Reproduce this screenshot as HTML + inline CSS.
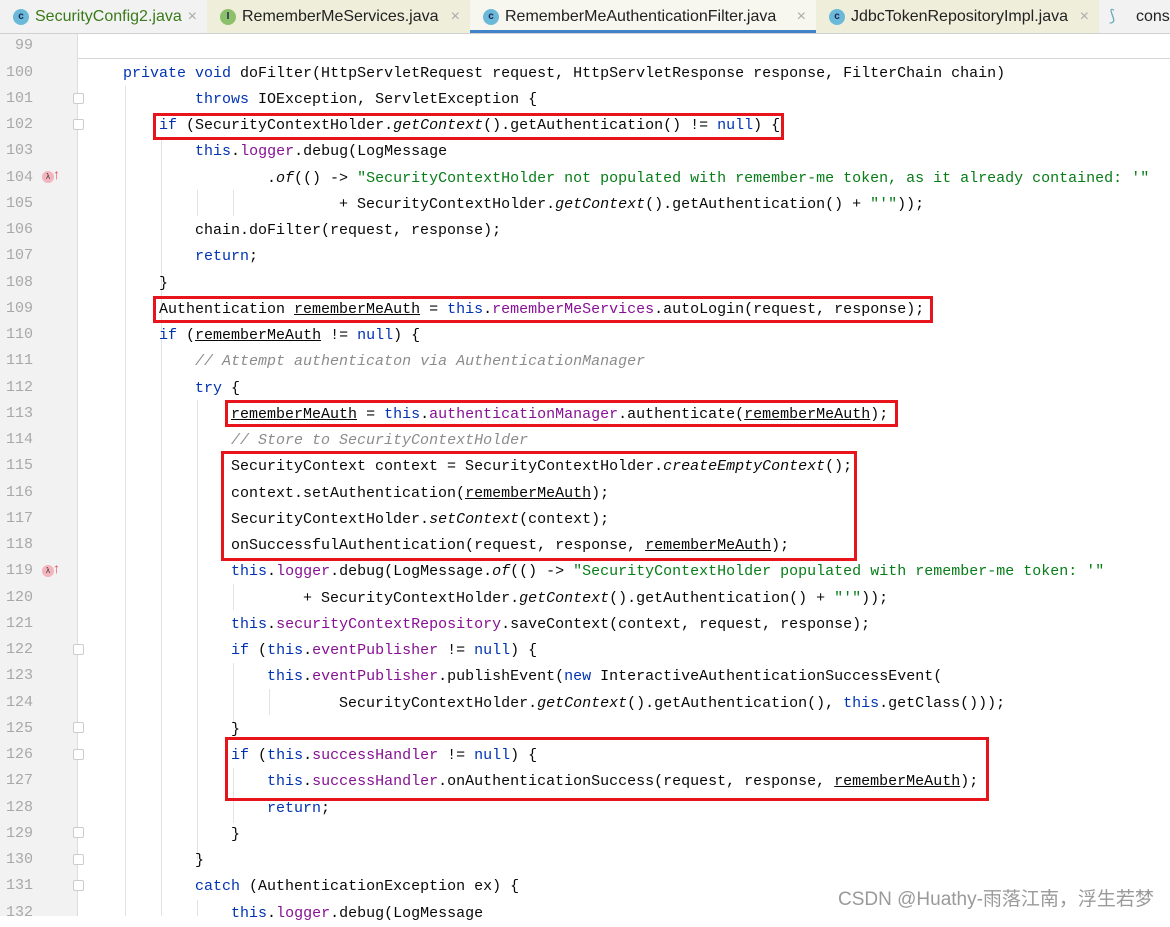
<!DOCTYPE html>
<html><head><meta charset="utf-8"><style>
*{margin:0;padding:0;box-sizing:border-box}
body{width:1170px;height:916px;overflow:hidden;background:#fff;position:relative;font-family:"Liberation Mono",monospace}
.tabs{position:absolute;left:0;top:0;width:1170px;height:34px;background:#f2f2f2;border-bottom:1px solid #d0d0d0;font-family:"Liberation Sans",sans-serif;font-size:16px}
.tab{position:absolute;top:0;height:33px;line-height:34px;color:#222}
.tab .ic{position:absolute;left:13px;top:9px;width:16px;height:16px;border-radius:50%;background:#6bb9d9;color:#225;font-size:10px;line-height:16px;text-align:center;font-weight:bold}
.tab .t{position:absolute;left:35px;top:0;white-space:nowrap}
.tab .x{position:absolute;right:10px;top:0;color:#aaa;font-size:16px}
.gut{position:absolute;left:0;top:34px;width:78px;height:882px;background:#f2f2f2;border-right:1px solid #dcdcdc}
.ln{position:absolute;left:0;width:33px;text-align:right;color:#a8a8a8;font-size:15px;height:26px;line-height:26px}
.code{position:absolute;left:87px;font-size:15px;white-space:pre;color:#080808;height:26px;line-height:27px}
.k{color:#0033b3}.f{color:#871094}.c{color:#8c8c8c;font-style:italic}.s{color:#067d17}.i{font-style:italic}.u{text-decoration:underline}
.g{position:absolute;width:1px;background:#e3e3e3}
.box{position:absolute;border:3px solid #e8141b}
.fold{position:absolute;left:73px;width:11px;height:11px;border:1px solid #ccc;background:#fff;border-radius:2px}
.sep{position:absolute;left:78px;top:58px;width:1092px;height:1px;background:#d8d8d8}
.wm{position:absolute;left:838px;top:884px;font-family:"Liberation Sans","Noto Sans CJK SC",sans-serif;font-size:19px;color:#9a9a9a;white-space:nowrap}
.lam{position:absolute;left:42px;width:12px;height:12px;border-radius:50%;background:#f3b4bd;font-size:8px;line-height:12px;text-align:center;color:#333;font-family:"Liberation Sans",sans-serif}
.arr{position:absolute;left:53px;color:#e05060;font-size:14px;font-family:"Liberation Sans",sans-serif}
</style></head><body>
<div class="tabs">
 <div class="tab" style="left:0;width:207px;background:#f2f2f2"><span class="ic">c</span><span class="t" style="color:#3a7a1a">SecurityConfig2.java</span><span class="x">×</span></div>
 <div class="tab" style="left:207px;width:263px;background:#eeeedb"><span class="ic" style="background:#8cc06a">I</span><span class="t">RememberMeServices.java</span><span class="x">×</span></div>
 <div class="tab" style="left:470px;width:346px;background:#f7f7ef;border-bottom:3px solid #4083c9"><span class="ic">c</span><span class="t">RememberMeAuthenticationFilter.java</span><span class="x">×</span></div>
 <div class="tab" style="left:816px;width:283px;background:#eeeedb"><span class="ic">c</span><span class="t">JdbcTokenRepositoryImpl.java</span><span class="x">×</span></div>
 <div class="tab" style="left:1099px;width:71px;background:#f2f2f2"><span class="t" style="left:10px;color:#6ab">⟆</span><span class="t" style="left:37px">cons</span></div>
</div>
<div class="gut"></div>
<div class="sep"></div>
<div class="g" style="left:125px;top:86px;height:830px"></div>
<div class="g" style="left:161px;top:140px;height:776px;background:#dde3ea"></div>
<div class="g" style="left:197px;top:190px;height:26px"></div>
<div class="g" style="left:233px;top:190px;height:26px"></div>
<div class="g" style="left:197px;top:400px;height:460px;background:#dde3ea"></div>
<div class="g" style="left:233px;top:584px;height:26px"></div>
<div class="g" style="left:233px;top:663px;height:60px"></div>
<div class="g" style="left:269px;top:689px;height:26px"></div>
<div class="g" style="left:233px;top:768px;height:55px"></div>
<div class="g" style="left:197px;top:900px;height:16px"></div>

<div class="fold" style="top:93px"></div><div class="fold" style="top:119px"></div>
<div class="fold" style="top:644px"></div><div class="fold" style="top:722px"></div><div class="fold" style="top:749px"></div><div class="fold" style="top:827px"></div><div class="fold" style="top:854px"></div><div class="fold" style="top:880px"></div>
<div class="lam" style="top:171px">λ</div><div class="arr" style="top:166px">↑</div>
<div class="lam" style="top:565px">λ</div><div class="arr" style="top:560px">↑</div>

<div class="ln" style="top:33px">99</div><div class="code" style="top:33px"></div>
<div class="ln" style="top:60px">100</div><div class="code" style="top:60px">    <span class="k">private void</span> doFilter(HttpServletRequest request, HttpServletResponse response, FilterChain chain)</div>
<div class="ln" style="top:86px">101</div><div class="code" style="top:86px">            <span class="k">throws</span> IOException, ServletException {</div>
<div class="ln" style="top:112px">102</div><div class="code" style="top:112px">        <span class="k">if</span> (SecurityContextHolder.<span class="i">getContext</span>().getAuthentication() != <span class="k">null</span>) {</div>
<div class="ln" style="top:138px">103</div><div class="code" style="top:138px">            <span class="k">this</span>.<span class="f">logger</span>.debug(LogMessage</div>
<div class="ln" style="top:165px">104</div><div class="code" style="top:165px">                    .<span class="i">of</span>(() -&gt; <span class="s">"SecurityContextHolder not populated with remember-me token, as it already contained: '"</span></div>
<div class="ln" style="top:191px">105</div><div class="code" style="top:191px">                            + SecurityContextHolder.<span class="i">getContext</span>().getAuthentication() + <span class="s">"'"</span>));</div>
<div class="ln" style="top:217px">106</div><div class="code" style="top:217px">            chain.doFilter(request, response);</div>
<div class="ln" style="top:243px">107</div><div class="code" style="top:243px">            <span class="k">return</span>;</div>
<div class="ln" style="top:270px">108</div><div class="code" style="top:270px">        }</div>
<div class="ln" style="top:296px">109</div><div class="code" style="top:296px">        Authentication <span class="u">rememberMeAuth</span> = <span class="k">this</span>.<span class="f">rememberMeServices</span>.autoLogin(request, response);</div>
<div class="ln" style="top:322px">110</div><div class="code" style="top:322px">        <span class="k">if</span> (<span class="u">rememberMeAuth</span> != <span class="k">null</span>) {</div>
<div class="ln" style="top:348px">111</div><div class="code" style="top:348px">            <span class="c">// Attempt authenticaton via AuthenticationManager</span></div>
<div class="ln" style="top:375px">112</div><div class="code" style="top:375px">            <span class="k">try</span> {</div>
<div class="ln" style="top:401px">113</div><div class="code" style="top:401px">                <span class="u">rememberMeAuth</span> = <span class="k">this</span>.<span class="f">authenticationManager</span>.authenticate(<span class="u">rememberMeAuth</span>);</div>
<div class="ln" style="top:427px">114</div><div class="code" style="top:427px">                <span class="c">// Store to SecurityContextHolder</span></div>
<div class="ln" style="top:453px">115</div><div class="code" style="top:453px">                SecurityContext context = SecurityContextHolder.<span class="i">createEmptyContext</span>();</div>
<div class="ln" style="top:480px">116</div><div class="code" style="top:480px">                context.setAuthentication(<span class="u">rememberMeAuth</span>);</div>
<div class="ln" style="top:506px">117</div><div class="code" style="top:506px">                SecurityContextHolder.<span class="i">setContext</span>(context);</div>
<div class="ln" style="top:532px">118</div><div class="code" style="top:532px">                onSuccessfulAuthentication(request, response, <span class="u">rememberMeAuth</span>);</div>
<div class="ln" style="top:558px">119</div><div class="code" style="top:558px">                <span class="k">this</span>.<span class="f">logger</span>.debug(LogMessage.<span class="i">of</span>(() -&gt; <span class="s">"SecurityContextHolder populated with remember-me token: '"</span></div>
<div class="ln" style="top:585px">120</div><div class="code" style="top:585px">                        + SecurityContextHolder.<span class="i">getContext</span>().getAuthentication() + <span class="s">"'"</span>));</div>
<div class="ln" style="top:611px">121</div><div class="code" style="top:611px">                <span class="k">this</span>.<span class="f">securityContextRepository</span>.saveContext(context, request, response);</div>
<div class="ln" style="top:637px">122</div><div class="code" style="top:637px">                <span class="k">if</span> (<span class="k">this</span>.<span class="f">eventPublisher</span> != <span class="k">null</span>) {</div>
<div class="ln" style="top:663px">123</div><div class="code" style="top:663px">                    <span class="k">this</span>.<span class="f">eventPublisher</span>.publishEvent(<span class="k">new</span> InteractiveAuthenticationSuccessEvent(</div>
<div class="ln" style="top:690px">124</div><div class="code" style="top:690px">                            SecurityContextHolder.<span class="i">getContext</span>().getAuthentication(), <span class="k">this</span>.getClass()));</div>
<div class="ln" style="top:716px">125</div><div class="code" style="top:716px">                }</div>
<div class="ln" style="top:742px">126</div><div class="code" style="top:742px">                <span class="k">if</span> (<span class="k">this</span>.<span class="f">successHandler</span> != <span class="k">null</span>) {</div>
<div class="ln" style="top:768px">127</div><div class="code" style="top:768px">                    <span class="k">this</span>.<span class="f">successHandler</span>.onAuthenticationSuccess(request, response, <span class="u">rememberMeAuth</span>);</div>
<div class="ln" style="top:795px">128</div><div class="code" style="top:795px">                    <span class="k">return</span>;</div>
<div class="ln" style="top:821px">129</div><div class="code" style="top:821px">                }</div>
<div class="ln" style="top:847px">130</div><div class="code" style="top:847px">            }</div>
<div class="ln" style="top:873px">131</div><div class="code" style="top:873px">            <span class="k">catch</span> (AuthenticationException ex) {</div>
<div class="ln" style="top:900px">132</div><div class="code" style="top:900px">                <span class="k">this</span>.<span class="f">logger</span>.debug(LogMessage</div>

<div class="box" style="left:153px;top:113px;width:631px;height:27px"></div>
<div class="box" style="left:153px;top:296px;width:780px;height:27px"></div>
<div class="box" style="left:225px;top:400px;width:673px;height:27px"></div>
<div class="box" style="left:221px;top:451px;width:636px;height:110px"></div>
<div class="box" style="left:225px;top:737px;width:764px;height:64px"></div>

<div class="wm">CSDN @Huathy-雨落江南，浮生若梦</div>
</body></html>
